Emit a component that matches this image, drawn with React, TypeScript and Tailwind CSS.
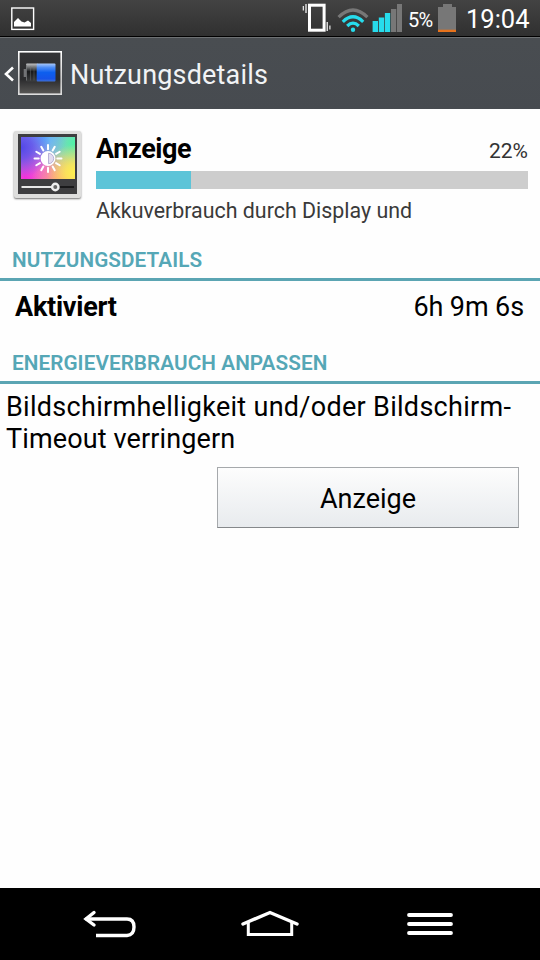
import type { ReactNode } from "react";

function PictureIcon() {
  return (
    <svg className="w-6 h-6 shrink-0" viewBox="0 0 24 24" fill="none">
      <rect x=".8" y="1" width="21.8" height="21.4" stroke="#fff" strokeWidth="1.4" />
      <path d="M3 19.5V15L7 11L10.5 14.5L13.5 15.5L17 13.5L20 16V19.5Z" fill="#fff" />
    </svg>
  );
}

function VibrateIcon() {
  return (
    <svg className="w-[30px] h-8 shrink-0" viewBox="0 0 30 32" fill="none" stroke="#fff">
      <rect x="7.5" y="5.2" width="14.6" height="25" strokeWidth="3" />
      <path d="M1.3 6V10.5M27.9 25.5V29.5" strokeWidth="1.1" />
      <path d="M4 4V13M25.2 22V31" strokeWidth="1.2" />
    </svg>
  );
}

function WifiIcon() {
  return (
    <svg className="w-8 h-6 shrink-0" viewBox="0 0 32 24" fill="none" strokeWidth="3.2">
      <path d="M1.6 9.2Q16 -5.2 30.4 9.2" stroke="#777" />
      <path d="M5.8 13.8Q16 3.8 26.2 13.8" stroke="#27dcec" />
      <path d="M10.2 18Q16 12.2 21.8 18" stroke="#27dcec" />
      <circle cx="16" cy="21.7" r="2.2" fill="#27dcec" />
    </svg>
  );
}

function SignalIcon() {
  return (
    <svg className="w-[30px] h-7 shrink-0" viewBox="0 0 30 28">
      <path d="M0.6 17H6V28H0.6ZM6.8 13.5H12.2V28H6.8ZM12.9 9H18.2V28H12.9Z" fill="#27dcec" />
      <path d="M19 5H24.3V28H19ZM25 0H30V28H25Z" fill="#777" />
    </svg>
  );
}

function StatusBattery() {
  return (
    <svg className="w-[18px] h-7 shrink-0" viewBox="0 0 18 28">
      <path d="M5 0H14V3H18V28H0V3H5Z" fill="#777" />
      <path d="M0 25.7H18V28H0Z" fill="#e8731c" />
    </svg>
  );
}

function BatteryAppIcon() {
  return (
    <svg className="w-11 h-11 -mt-0.5 shrink-0" viewBox="0 0 44 44">
      <defs>
        <linearGradient id="tile" x1="0" y1="0" x2="0" y2="1">
          <stop offset="0" stopColor="#343436" />
          <stop offset=".65" stopColor="#2b2b2d" />
          <stop offset="1" stopColor="#5a5957" />
        </linearGradient>
        <linearGradient id="frame" x1="0" y1="0" x2="0" y2="1">
          <stop offset="0" stopColor="#fff" />
          <stop offset=".7" stopColor="#c9c9c9" />
          <stop offset="1" stopColor="#dedede" />
        </linearGradient>
        <linearGradient id="cell" x1="0" y1="0" x2="0" y2="1">
          <stop offset="0" stopColor="#aac9fa" />
          <stop offset=".22" stopColor="#4f8df5" />
          <stop offset=".5" stopColor="#0d5fee" />
          <stop offset=".85" stopColor="#1653e8" />
          <stop offset="1" stopColor="#4272d4" />
        </linearGradient>
        <linearGradient id="empty" x1="0" y1="0" x2="0" y2="1">
          <stop offset="0" stopColor="#c2c2c4" />
          <stop offset=".25" stopColor="#626466" />
          <stop offset=".45" stopColor="#18191b" />
          <stop offset="1" stopColor="#3c3d3e" />
        </linearGradient>
      </defs>
      <rect x=".8" y=".8" width="42.4" height="42.4" fill="url(#tile)" stroke="url(#frame)" strokeWidth="1.6" />
      <rect x="5.7" y="18" width="3" height="8" fill="#717275" />
      <rect x="8" y="12.5" width="12" height="18" rx="1" fill="url(#empty)" />
      <path d="M8.5 14V29.5" stroke="#77797b" strokeWidth=".8" />
      <path d="M12.5 15V29.5M16 15V29.5" stroke="#77797b" strokeWidth=".4" />
      <rect x="18.7" y="12.5" width="18.8" height="18" rx="1" fill="url(#cell)" />
    </svg>
  );
}

const rays = [0, 30, 60, 90, 120, 150, 180, 210, 240, 270, 300, 330];

function DisplayIcon() {
  return (
    <div className="relative w-[67px] h-[67px] shrink-0 bg-[#dededd] pt-[3px] pl-1 rounded-[2px] shadow-[0_1px_2px_rgba(0,0,0,0.55)]">
      <div className="w-[59px] h-[60px] bg-[#3e3e40] pl-[3px] pt-[3px]">
        <div className="w-[54px] h-[42px] bg-[radial-gradient(circle_at_0%_25%,#5048e8_0%,#5a4ceacc_18%,transparent_48%),radial-gradient(circle_at_100%_85%,#fff04d_0%,#fff04dcc_14%,transparent_44%),radial-gradient(circle_at_42%_0%,#58b4ff_0%,transparent_45%),radial-gradient(circle_at_72%_110%,#ff9a78_0%,#ff9a7899_20%,transparent_48%),radial-gradient(circle_at_100%_15%,#4ff5a4_0%,transparent_58%),radial-gradient(circle_at_8%_100%,#f22ddc_0%,transparent_60%),linear-gradient(#b7a0ef,#f2a3c4)]" />
      </div>
      <svg className="absolute inset-0 w-[67px] h-[67px]" viewBox="0 0 67 67" fill="none">
        <g stroke="#fff" strokeWidth="2" strokeLinecap="round">
          {rays.map((deg) => (
            <path key={deg} d="M34 18.2V14" transform={`rotate(${deg} 34 27.5)`} />
          ))}
        </g>
        <circle cx="34" cy="27.5" r="7.4" fill="#fff" />
        <path d="M34.5 22.3A5.2 5.2 0 0 1 34.5 32.7Z" fill="#e2dcf0" stroke="#a9a1d0" strokeWidth=".8" />
        <path d="M7.5 56H38" stroke="#e8e8e8" strokeWidth="2" />
        <path d="M44 56H60" stroke="#19191a" strokeWidth="2" />
        <circle cx="41.3" cy="56" r="3.2" fill="#666" stroke="#eee" strokeWidth="2.4" />
      </svg>
    </div>
  );
}

function SectionTitle({ children }: { children: ReactNode }) {
  return (
    <h2 className="h-[43px] pl-3 pt-[6px] border-b-[3px] border-[#5ba5b3] text-[20.7px] leading-[32px] tracking-[0.08px] font-semibold text-[#55a7b6] whitespace-nowrap">
      {children}
    </h2>
  );
}

export default function App() {
  return (
    <div className="w-[540px] h-[960px] flex flex-col overflow-hidden bg-[#fefefe] text-black font-['Roboto',sans-serif]">
      <div className="h-[37px] shrink-0 flex items-start bg-linear-to-b from-[#434343] to-[#303030] border-b border-black text-white">
        <div className="pl-[11px] pt-[7px]">
          <PictureIcon />
        </div>
        <div className="ml-auto flex items-start">
          <VibrateIcon />
          <div className="ml-[5px] pt-[8px]"><WifiIcon /></div>
          <div className="ml-[3px] pt-1"><SignalIcon /></div>
          <span className="w-[26px] ml-[6px] text-[20px] leading-[40px] tracking-[-0.8px]">5%</span>
          <div className="ml-[4px] pt-[4px]"><StatusBattery /></div>
          <span className="w-[63px] ml-[10px] mr-[11px] text-[25.5px] leading-[39px]">19:04</span>
        </div>
      </div>

      <header className="h-[72px] shrink-0 flex items-center bg-linear-to-b from-[#494d51] to-[#474b50] border-t border-[#6e7173]">
        <svg className="w-[10px] h-4 ml-[4px] mr-1 shrink-0" viewBox="0 0 10 16" fill="none">
          <path d="M9 1.5L2 8L9 14.5" stroke="#fff" strokeWidth="2.6" />
        </svg>
        <BatteryAppIcon />
        <h1 className="ml-[8px] mt-[2px] text-[27px] leading-[36px] tracking-[0.18px] text-[#f1f3f5] whitespace-nowrap">Nutzungsdetails</h1>
      </header>

      <main className="grow">
        <section className="h-[128px] flex pl-[14px] pr-3 pt-[22px]">
          <DisplayIcon />
          <div className="grow ml-[15px]">
            <div className="h-10 flex justify-between">
              <span className="text-[27px] leading-[36px] tracking-[-0.4px] font-bold">Anzeige</span>
              <span className="text-[21px] leading-[40px] text-[#333]">22%</span>
            </div>
            <div className="h-[18px] bg-[#cdcdcd]">
              <div className="w-[22%] h-full bg-[#5dc4d8]" />
            </div>
            <p className="text-[21.4px] leading-[44px] text-[#3a3a3a] whitespace-nowrap">Akkuverbrauch durch Display und</p>
          </div>
        </section>

        <div className="mt-[1px]">
          <SectionTitle>NUTZUNGSDETAILS</SectionTitle>
        </div>
        <div className="h-[60px] flex justify-between pl-[15px] pr-4 text-[27px] leading-[53px]">
          <span className="tracking-[-0.25px] font-bold">Aktiviert</span>
          <span className="tracking-[-0.1px]">6h 9m 6s</span>
        </div>
        <SectionTitle>ENERGIEVERBRAUCH ANPASSEN</SectionTitle>
        <p className="pl-[6px] pt-[7px] text-[27px] leading-8 whitespace-nowrap">
          <span className="tracking-[0.29px]">Bildschirmhelligkeit und/oder Bildschirm-</span>
          <br />
          <span className="tracking-[0.12px]">Timeout verringern</span>
        </p>
        <button className="block w-[302px] h-[61px] ml-[217px] mt-[12px] pt-[3px] bg-linear-to-b from-[#fdfdfd] to-[#e8ebee] border border-[#a6a9ac] border-b-[#85888b] text-[27px]">
          Anzeige
        </button>
      </main>

      <nav className="h-[72px] shrink-0 flex items-center bg-black">
        <svg className="w-[54px] h-7 ml-[83px]" viewBox="0 0 54 28" fill="none" stroke="#fff" strokeWidth="3.4">
          <path d="M2.5 9H44Q51 9 51 17T44 25.5H13" strokeWidth="3.4" />
          <path d="M11 2.5L3 9L11 15" strokeLinecap="round" />
        </svg>
        <svg className="w-[58px] h-7 ml-[104px]" viewBox="0 0 58 28" fill="none" stroke="#fff" strokeWidth="3.4" strokeLinecap="round">
          <path d="M2 14L29 2.5L56 14" />
          <path d="M7.3 13V24.5H50.7V13" strokeWidth="3" />
        </svg>
        <svg className="w-12 h-7 ml-[107px]" viewBox="0 0 48 28" fill="none" stroke="#fff" strokeWidth="3.8" strokeLinecap="round">
          <path d="M3 5H45M3 14H45M3 23H45" />
        </svg>
      </nav>
    </div>
  );
}
